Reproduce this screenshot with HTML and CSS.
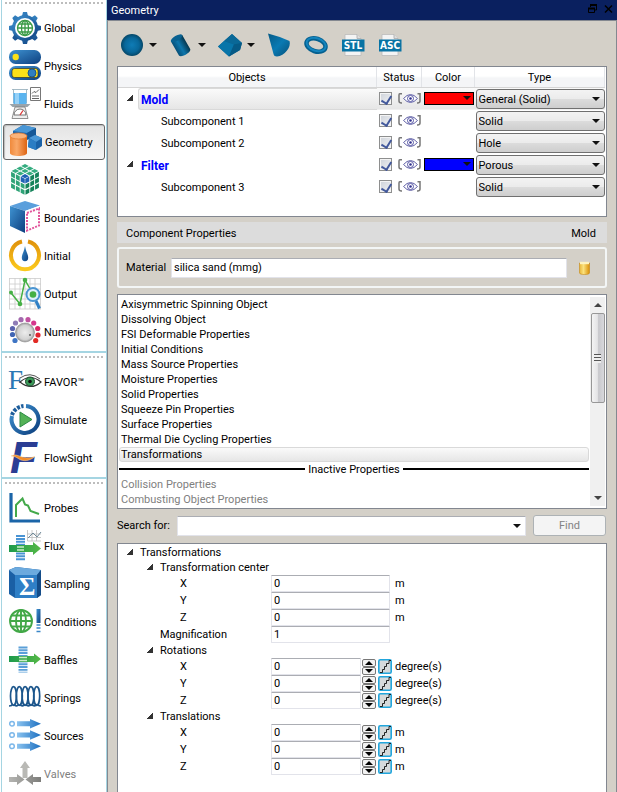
FILE: index.html
```html
<!DOCTYPE html>
<html lang="en">
<head>
<meta charset="utf-8">
<title>Geometry</title>
<link rel="stylesheet" href="styles.css">
</head>
<body>
<svg class="defs" aria-hidden="true">
  <defs>
    <linearGradient id="blue" x1="0" y1="0" x2="1" y2="1"><stop offset="0" stop-color="#3f93d2"/><stop offset="1" stop-color="#0d3f7e"/></linearGradient>
    <linearGradient id="blueH" x1="0" y1="0" x2="1" y2="0"><stop offset="0" stop-color="#8cc4f0"/><stop offset="1" stop-color="#1c6fc0"/></linearGradient>
    <linearGradient id="orange" x1="0" y1="0" x2="1" y2="0"><stop offset="0" stop-color="#f08a3c"/><stop offset=".4" stop-color="#f9a868"/><stop offset="1" stop-color="#dd6413"/></linearGradient>
    <linearGradient id="gold" x1="0" y1="0" x2="0" y2="1"><stop offset="0" stop-color="#e0930c"/><stop offset="1" stop-color="#fbc81c"/></linearGradient>
    <linearGradient id="green" x1="0" y1="0" x2="1" y2="0"><stop offset="0" stop-color="#1d9a4c"/><stop offset="1" stop-color="#57b947"/></linearGradient>
    <linearGradient id="grey" x1="0" y1="0" x2="1" y2="0"><stop offset="0" stop-color="#b5b5b2"/><stop offset="1" stop-color="#7d7d7a"/></linearGradient>
    <linearGradient id="drum" x1="0" y1="0" x2="1" y2="0"><stop offset="0" stop-color="#e8b63a"/><stop offset=".4" stop-color="#fbe27c"/><stop offset="1" stop-color="#d98f06"/></linearGradient>
    <linearGradient id="tube" x1="0" y1="0" x2="1" y2="0"><stop offset="0" stop-color="#075078"/><stop offset=".45" stop-color="#0d76ac"/><stop offset="1" stop-color="#04374f"/></linearGradient>
    <linearGradient id="slope" x1="0" y1="0" x2="1" y2="1"><stop offset="0" stop-color="#065a86"/><stop offset=".5" stop-color="#0a7ab3"/><stop offset="1" stop-color="#065079"/></linearGradient>
    <radialGradient id="ball"><stop offset="0" stop-color="#0f7cb6"/><stop offset=".65" stop-color="#08679a"/><stop offset="1" stop-color="#054768"/></radialGradient>
    <radialGradient id="knob"><stop offset="0" stop-color="#ededed"/><stop offset=".75" stop-color="#d2d2d2"/><stop offset="1" stop-color="#9c9c9c"/></radialGradient>
    <symbol id="eye" viewBox="0 0 23 11">
      <path d="M4 .8H1.800Q1 .8 1 2V8Q1 10 3.500 10H4M19.500 .8H22V8Q22 10 19.500 10H19" fill="none" stroke="#777" stroke-width="1.500"/>
      <path d="M5.500 5.500Q12.500 -2.500 19.500 5.500Q12.500 13.500 5.500 5.500Z" fill="#fff" stroke="#6464a8"/>
      <circle cx="12.500" cy="5.500" r="3" fill="#fff" stroke="#5555a5"/><circle cx="12.500" cy="5.500" r="1.300" fill="#30308e"/>
    </symbol>
    <symbol id="step" viewBox="0 0 14 15">
      <rect x=".8" y=".8" width="12.400" height="13.400" rx="1.500" fill="#d6dadb" stroke="#22a6dc" stroke-width="1.600"/>
      <path d="M2 13.500H4.500V10.500H6.500V7.500H8.500V4.500H11V1.500H13" fill="none" stroke="#222"/>
    </symbol>
    <g id="tiles">
      <path d="M1.100 .1h.8v.8h-.8zM2.100 .1h.8v.8h-.8zM.1 1.100h.8v.8h-.8zM1.100 1.100h.8v.8h-.8zM2.100 1.100h.8v.8h-.8zM.1 2.100h.8v.8h-.8zM1.100 2.100h.8v.8h-.8zM2.100 2.100h.8v.8h-.8z"/>
      <path d="M.05 .05h.85v.85h-.85z" fill="#1f62b5"/>
    </g>
  </defs>
</svg>
<div class="app">
  <nav class="sidebar" aria-label="Model setup">
    <section class="group">
      <div class="grip"></div>
      <button class="item"><svg viewBox="0 0 32 32">
        <g fill="url(#blue)"><circle cx="16" cy="16" r="13"/><path d="M13 4l1-4h4l1 4zM13 28l1 4h4l1-4zM4 13l-4 1v4l4 1zM28 13l4 1v4l-4 1z"/><path d="M13 4l1-4h4l1 4zM13 28l1 4h4l1-4zM4 13l-4 1v4l4 1zM28 13l4 1v4l-4 1z" transform="rotate(45 16 16)"/></g>
        <circle cx="16" cy="16" r="10" fill="#fff"/>
        <g fill="none" stroke="#3a9a45" stroke-width="1.300"><circle cx="16" cy="16" r="7.500"/><ellipse cx="16" cy="16" rx="3.500" ry="7.500"/><path d="M16 8.500v15M8.500 16h15M10 12h12M10 20h12"/></g></svg>Global</button>
      <button class="item"><svg viewBox="0 0 32 32"><rect y="0" width="32" height="14" rx="6.500" fill="url(#blue)"/><circle cx="6.700" cy="7" r="3.200" fill="#fbe118"/><rect y="16" width="32" height="14" rx="6.500" fill="url(#blue)"/><rect x="3" y="18.500" width="26" height="9" rx="2.500" fill="#fbe118" stroke="#222" stroke-width=".6"/><circle cx="23" cy="23" r="4" fill="#2f7fc0" stroke="#17568f"/></svg>Physics</button>
      <button class="item"><svg viewBox="0 0 32 32"><path d="M3 1.500h16M4.500 1.500V15h13V1.500" fill="#fff" stroke="#8fa9b8" stroke-width=".8"/><rect x="4.500" y="5" width="13" height="11" fill="#5bb4ef"/><rect x="6" y="5" width="4" height="11" fill="#96d1f7"/><path d="M.5 16h21l-3 3h-15z" fill="#9aa4ab"/><path d="M6 19h10l3 11.500H3z" fill="#eee" stroke="#777" stroke-width=".8"/><path d="M5 27a6 6 0 0 1 12 0z" fill="#fff" stroke="#555" stroke-width=".8"/><path d="M11 27l3-4.500" stroke="#d33" stroke-width="1.300"/><path d="M21.500-.5h10v13h-10z" fill="#fff" stroke="#777"/><path d="M23 5.500l2-2 2 1 3-3M23 8h7M23 10.500h7" fill="none" stroke="#555" stroke-width=".9"/></svg>Fluids</button>
      <button class="item active"><svg viewBox="0 0 32 32"><path d="M3 5L13-1l13 3v8l-8 3-15-3z" fill="#1d65aa"/><path d="M3 5L13-1l13 3-9 5z" fill="#4a97d6"/><path d="M17 7l9-5v8l-9 4z" fill="#165897"/><path d="M19 12l6-3 7 3v8l-6 4-8-3z" fill="#1a62a8"/><path d="M19 12l6-3 7 3-6 4z" fill="#4a97d6"/><path d="M19 12l7 4v8l-8-3z" fill="#2b7dc4"/><path d="M0 10v17c0 4 17 4 17 0V10z" fill="url(#orange)"/><ellipse cx="8.500" cy="10" rx="8.500" ry="3" fill="#fbb37a" stroke="#e77f33" stroke-width=".8"/></svg>Geometry</button>
      <button class="item"><svg viewBox="0 0 32 32">
        <use href="#tiles" transform="matrix(-4.800 -2.500 4.800 -2.500 16 14.500)" fill="#35ad80"/>
        <use href="#tiles" transform="matrix(-4.800 -2.500 0 5.700 16 14.500)" fill="#2fa377"/>
        <use href="#tiles" transform="matrix(4.800 -2.500 0 5.700 16 14.500)" fill="#15835a"/></svg>Mesh</button>
      <button class="item"><svg viewBox="0 0 32 32"><path d="M1 4l15-5 15 4.500L16 9z" fill="#5b9fdc"/><path d="M1 4l15 5v22L1 24z" fill="url(#blue)"/><path d="M16 9l15-5.500v21L16 31z" fill="#fff"/><path d="M18 11l12-4.500v17l-12 5z" fill="none" stroke="#e2559b" stroke-width="2" stroke-dasharray="2 1.200"/></svg>Boundaries</button>
      <button class="item"><svg viewBox="0 0 32 32"><path d="M19 1.500A14 14 0 1 1 13 1.500" fill="none" stroke="url(#gold)" stroke-width="4"/><path d="M16 6c1 6 3.200 8.500 3.200 11.500a3.200 3.800 0 0 1-6.400 0C12.800 14.500 15 12 16 6z" fill="url(#blue)"/></svg>Initial</button>
      <button class="item"><svg viewBox="0 0 32 32"><path d="M.5 0v31M6 0v31M11 0v31M16 0v31M21 0v31M26 0v31M31.500 0v31M0 .5h32M0 6h32M0 11h32M0 16h32M0 21h32M0 26h32M0 31h32" stroke="#ccc" stroke-width=".8"/><path d="M1.700 14.500L11 26 16 2l8 14" fill="none" stroke="#45b045" stroke-width="1.500"/><g fill="#45b045"><circle cx="2" cy="14.500" r="2"/><circle cx="11" cy="26" r="2.300"/><circle cx="16" cy="2" r="2.300"/></g><circle cx="24" cy="16.500" r="6.500" fill="#dff1fc" stroke="#4b95d2" stroke-width="2"/><circle cx="24" cy="16.500" r="3.300" fill="#45b045"/><path d="M27 23l3.500 7.500" stroke="#3180c5" stroke-width="3"/></svg>Output</button>
      <button class="item"><svg viewBox="0 0 32 32"><circle cx="16" cy="16.500" r="9.500" fill="url(#knob)" stroke="#888" stroke-width=".6"/><circle cx="21" cy="19" r=".9" fill="#555"/><circle cx="6" cy="24.500" r="2.600" fill="#3e75c4"/><circle cx="3.500" cy="18.500" r="2.600" fill="#4166b4"/><circle cx="3.500" cy="12.500" r="2.600" fill="#5a62ae"/><circle cx="6.500" cy="7" r="2.600" fill="#8f7cb6"/><circle cx="12" cy="3.700" r="2.600" fill="#a269ad"/><circle cx="19" cy="3.700" r="2.600" fill="#c0519f"/><circle cx="24.700" cy="7" r="2.600" fill="#d4388c"/><circle cx="28.700" cy="12.500" r="2.600" fill="#d92667"/><circle cx="29" cy="19" r="2.600" fill="#e0242f"/><circle cx="26.700" cy="24.500" r="2.600" fill="#e22a24"/></svg>Numerics</button>
    </section>
    <section class="group">
      <div class="grip"></div>
      <button class="item"><svg viewBox="0 0 32 32"><text class="serif-f" x="-1" y="23">F</text><path d="M11 16q10-9 21 0-10 9-21 0z" fill="#fff" stroke="#333" stroke-width="1.200"/><circle cx="21" cy="15.500" r="4.500" fill="#3a9a58" stroke="#1c4a2c"/><circle cx="21" cy="15.500" r="1.800" fill="#111"/><path d="M11 12q10-7 20 1" fill="none" stroke="#555"/></svg>FAVOR™</button>
      <button class="item"><svg viewBox="0 0 32 32"><path d="M17 2A13.500 13.500 0 1 1 3 12" fill="none" stroke="url(#blue)" stroke-width="4"/><path d="M3 11A13.500 13.500 0 0 1 14.500 2" fill="none" stroke="#1d5d9b" stroke-width="4" stroke-dasharray="3 1.300"/><path d="M11 8l12 7.500L11 23z" fill="#54b257" stroke="#2d8b45"/></svg>Simulate</button>
      <button class="item"><svg viewBox="0 0 32 32"><text class="logo-f" x="1" y="31">F</text><path d="M2 14c7-4 11 5 24 .5-6 5-12 5-16 2.500-3-2-5-3-8-3z" fill="#f28c28" stroke="#fbd9a8" stroke-width=".5"/></svg>FlowSight</button>
    </section>
    <section class="group">
      <div class="grip"></div>
      <button class="item"><svg viewBox="0 0 32 32"><path d="M2 1v28h29" fill="none" stroke="#1b65a8" stroke-width="3.200"/><path d="M7 25V13l6.500-6.500 2.500 6 3 1 2.500 5.500 8.500 3" fill="none" stroke="#43a94a" stroke-width="2"/></svg>Probes</button>
      <button class="item"><svg viewBox="0 0 32 32"><path d="M18.500 0v11H32M23 0v11M27.500 0v11M18 4h14M18 7.500h14" fill="none" stroke="#bbb" stroke-width=".8"/><path d="M19 8l5-5 4 4 4-5" fill="none" stroke="#6f8a9a"/><path d="M11.500 5v26" stroke="#4a94d4" stroke-width="9" stroke-dasharray="2 .9"/><path d="M0 15h24v-3l8 6.500-8 6.500v-3H0z" fill="url(#green)"/><path d="M8 17h7M8 20h7" stroke="#cdeec9" stroke-width="1.300"/></svg>Flux</button>
      <button class="item"><svg viewBox="0 0 32 32"><path d="M0 2l7-3 25 3v25l-4 3H6l-6-4z" fill="#1a5fa5"/><path d="M0 2l7-3 25 3-4 5H6z" fill="#6caade"/><path d="M28 7l4-5v25l-4 3z" fill="#144c88"/><path d="M6 7h22v23H6z" fill="#2f7fc6"/><text class="sigma" x="10" y="27">Σ</text></svg>Sampling</button>
      <button class="item"><svg viewBox="0 0 32 32"><g fill="none" stroke="#42a847" stroke-width="1.900"><circle cx="12" cy="15" r="11"/><ellipse cx="12" cy="15" rx="5" ry="11"/><path d="M12 4v22M1 15h22M3 9.500h18M3 20.500h18"/></g><path d="M27.500 3h4v14h-4z" fill="url(#blue)"/><path d="M27.500 19h4M27.500 22h4M27.500 25.500h4" stroke="#3a86c8" stroke-width="1.500"/></svg>Conditions</button>
      <button class="item"><svg viewBox="0 0 32 32"><path d="M14 2.500v26" stroke="#5b9fd8" stroke-width="9" stroke-dasharray="1.900 .9"/><path d="M0 12h25V9.500l7 5.500-7 5.500V18H0z" fill="url(#green)"/><path d="M10 13.500h8M10 16.500h8" stroke="#cdeec9" stroke-width="1.300"/></svg>Baffles</button>
      <button class="item"><svg viewBox="0 0 32 32"><g fill="none" stroke="#1c568c" stroke-width="1.700"><ellipse cx="4.500" cy="14" rx="3" ry="9.300"/><ellipse cx="10.300" cy="14" rx="3" ry="9.300"/><ellipse cx="16.100" cy="14" rx="3" ry="9.300"/><ellipse cx="21.900" cy="14" rx="3" ry="9.300"/><ellipse cx="27.700" cy="14" rx="3" ry="9.300"/><path d="M0 24q3 0 4-2M5 23q4 2 5-1M11 23q4 2 5-1M17 23q4 2 5-1M23 23q4 2 5-1M29 23q1 1 3 1"/></g></svg>Springs</button>
      <button class="item"><svg viewBox="0 0 32 32"><g fill="none" stroke="#7db8ea" stroke-width="1.500"><circle cx="3" cy="3.700" r="2.300"/><circle cx="3" cy="15" r="2.300"/><circle cx="3" cy="26.300" r="2.300"/></g><g fill="url(#blueH)"><path d="M8 1.200h13V-1l11 4.700-11 4.700V6.200H8z"/><path d="M8 12.500h13v-2.200L32 15l-11 4.700v-2.200H8z"/><path d="M8 23.800h13v-2.200l11 4.700L21 31v-2.200H8z"/></g></svg>Sources</button>
      <button class="item disabled" disabled><svg viewBox="0 0 32 32"><path d="M13.500 20V10H11l5-7 5 7h-2.500v10z" fill="#b9b9b5"/><path d="M0 19h8v-3l7.500 5.500L8 27v-3H0zM32 19h-8v-3l-7.500 5.500L24 27v-3h8z" fill="url(#grey)"/></svg>Valves</button>
    </section>
  </nav>

  <main class="main">
    <header class="titlebar">
      <span>Geometry</span>
      <button aria-label="Restore"><svg viewBox="0 0 9 10"><path d="M2.500 3V1h6v5h-2M.5 4.500h6v4h-6z" fill="none" stroke="#000"/><path d="M2 1h7M0 4.500h7" stroke="#000" stroke-width="2"/></svg></button>
      <button aria-label="Close"><svg viewBox="0 0 9 10"><path d="M1 1.500l7 7M8 1.500l-7 7" stroke="#000" stroke-width="1.500"/></svg></button>
    </header>
    <div class="panel">
      <div class="toolbar">
        <button class="drop" aria-label="Sphere"><svg viewBox="0 0 24 24"><circle cx="12" cy="12" r="11" fill="url(#ball)"/></svg></button>
        <button class="drop" aria-label="Cylinder"><svg viewBox="0 0 24 24"><g transform="rotate(-30 12 12)"><path d="M5 4v16c0 3.500 13 3.500 13 0V4z" fill="url(#tube)"/><ellipse cx="11.500" cy="4" rx="6.500" ry="2.600" fill="#0a6291"/></g></svg></button>
        <button class="drop" aria-label="Box"><svg viewBox="0 0 24 24"><path d="M0 13.500L14 1l10 9-2 7-11 6.500z" fill="#07608f"/><path d="M14 1l10 9-8 1.500L6 8z" fill="#0a6897"/><path d="M6 8l10 3.500-5 12L0 13.500z" fill="#0875a9"/><path d="M16 11.500l8-1.500-2 7-11 6.500z" fill="#065a86"/></svg></button>
        <button aria-label="Cone"><svg viewBox="0 0 24 24"><path d="M1 .5Q13 3.500 22.500 8c2 6-5 15-12.500 15.500Q7 23.500 6.500 21z" fill="url(#slope)"/></svg></button>
        <button aria-label="Torus"><svg viewBox="0 0 24 24"><ellipse cx="12" cy="12" rx="9.800" ry="6.300" transform="rotate(18 12 12)" fill="none" stroke="#05608f" stroke-width="4.500"/><ellipse cx="12" cy="11.500" rx="9.800" ry="6.300" transform="rotate(18 12 12)" fill="none" stroke="#1484bd" stroke-width="2"/></svg></button>
        <button aria-label="Import STL"><svg viewBox="0 0 24 24"><path d="M4 1.500h12l4 4v17H4z" fill="#f4f4f4" stroke="#bbb" stroke-width=".8"/><path d="M16 1.500v4h4" fill="#ddd" stroke="#aaa" stroke-width=".8"/><rect x="1" y="6.500" width="22.500" height="12" fill="#0873a3"/><text class="badge" x="12" y="16">STL</text></svg></button>
        <button aria-label="Import ASC"><svg viewBox="0 0 24 24"><path d="M4 1.500h12l4 4v17H4z" fill="#f4f4f4" stroke="#bbb" stroke-width=".8"/><path d="M16 1.500v4h4" fill="#ddd" stroke="#aaa" stroke-width=".8"/><rect x="1" y="6.500" width="22.500" height="12" fill="#0873a3"/><text class="badge" x="12" y="16">ASC</text></svg></button>
      </div>

      <div class="objects frame">
        <table>
          <colgroup><col><col class="c-status"><col class="c-color"><col class="c-type"></colgroup>
          <thead><tr><th>Objects</th><th>Status</th><th>Color</th><th>Type</th></tr></thead>
          <tbody>
            <tr class="selected"><td><div class="name parent"><i class="twisty"></i><b>Mold</b></div></td><td><div class="status"><input type="checkbox" checked aria-label="Mold enabled"><button aria-label="Mold visibility"><svg><use href="#eye"/></svg></button></div></td><td><button class="color red" aria-label="Mold color"></button></td><td><span class="combo"><select aria-label="Mold type"><option>General (Solid)</option></select></span></td></tr>
            <tr><td><div class="name child">Subcomponent 1</div></td><td><div class="status"><input type="checkbox" checked aria-label="Subcomponent 1 enabled"><button aria-label="Subcomponent 1 visibility"><svg><use href="#eye"/></svg></button></div></td><td></td><td><span class="combo"><select aria-label="Subcomponent 1 type"><option>Solid</option></select></span></td></tr>
            <tr><td><div class="name child">Subcomponent 2</div></td><td><div class="status"><input type="checkbox" checked aria-label="Subcomponent 2 enabled"><button aria-label="Subcomponent 2 visibility"><svg><use href="#eye"/></svg></button></div></td><td></td><td><span class="combo"><select aria-label="Subcomponent 2 type"><option>Hole</option></select></span></td></tr>
            <tr><td><div class="name parent"><i class="twisty"></i><b>Filter</b></div></td><td><div class="status"><input type="checkbox" checked aria-label="Filter enabled"><button aria-label="Filter visibility"><svg><use href="#eye"/></svg></button></div></td><td><button class="color blue" aria-label="Filter color"></button></td><td><span class="combo"><select aria-label="Filter type"><option>Porous</option></select></span></td></tr>
            <tr><td><div class="name child">Subcomponent 3</div></td><td><div class="status"><input type="checkbox" checked aria-label="Subcomponent 3 enabled"><button aria-label="Subcomponent 3 visibility"><svg><use href="#eye"/></svg></button></div></td><td></td><td><span class="combo"><select aria-label="Subcomponent 3 type"><option>Solid</option></select></span></td></tr>
          </tbody>
        </table>
      </div>

      <div class="caption"><span>Component Properties</span><span>Mold</span></div>

      <div class="material">
        <label for="material">Material</label>
        <input class="field" id="material" type="text" value="silica sand (mmg)">
        <button aria-label="Material database"><svg viewBox="0 0 11 14"><path d="M.5 2v10c0 2 10 2 10 0V2z" fill="url(#drum)" stroke="#c48a1a" stroke-width=".6"/><path d="M1 .8h9v2.400H1z" fill="#fdf3c0"/></svg></button>
      </div>

      <div class="properties frame">
        <ul>
          <li>Axisymmetric Spinning Object</li>
          <li>Dissolving Object</li>
          <li>FSI Deformable Properties</li>
          <li>Initial Conditions</li>
          <li>Mass Source Properties</li>
          <li>Moisture Properties</li>
          <li>Solid Properties</li>
          <li>Squeeze Pin Properties</li>
          <li>Surface Properties</li>
          <li>Thermal Die Cycling Properties</li>
          <li class="current">Transformations</li>
          <li class="divider">Inactive Properties</li>
          <li class="inactive">Collision Properties</li>
          <li class="inactive">Combusting Object Properties</li>
        </ul>
        <div class="scroll" aria-hidden="true"><i class="up"></i><i class="thumb"></i><i class="down"></i></div>
      </div>

      <div class="search">
        <label for="search">Search for:</label>
        <span class="combo editable"><input class="field" id="search" type="text"></span>
        <button disabled>Find</button>
      </div>

      <div class="tree frame">
        <div class="node"><i class="twisty"></i>Transformations</div>
        <div class="node sub"><i class="twisty"></i>Transformation center</div>
        <div class="row"><label for="cx">X</label><input class="field" id="cx" value="0"><span>m</span></div>
        <div class="row"><label for="cy">Y</label><input class="field" id="cy" value="0"><span>m</span></div>
        <div class="row"><label for="cz">Z</label><input class="field" id="cz" value="0"><span>m</span></div>
        <div class="row shallow"><label for="mag">Magnification</label><input class="field" id="mag" value="1"></div>
        <div class="node sub"><i class="twisty"></i>Rotations</div>
        <div class="row spin"><label for="rx">X</label><input class="field" id="rx" value="0"><div class="steps"><button aria-label="Increase"></button><button aria-label="Decrease"></button></div><button class="table" aria-label="Rotation X table"><svg><use href="#step"/></svg></button><span>degree(s)</span></div>
        <div class="row spin"><label for="ry">Y</label><input class="field" id="ry" value="0"><div class="steps"><button aria-label="Increase"></button><button aria-label="Decrease"></button></div><button class="table" aria-label="Rotation Y table"><svg><use href="#step"/></svg></button><span>degree(s)</span></div>
        <div class="row spin"><label for="rz">Z</label><input class="field" id="rz" value="0"><div class="steps"><button aria-label="Increase"></button><button aria-label="Decrease"></button></div><button class="table" aria-label="Rotation Z table"><svg><use href="#step"/></svg></button><span>degree(s)</span></div>
        <div class="node sub"><i class="twisty"></i>Translations</div>
        <div class="row spin"><label for="tx">X</label><input class="field" id="tx" value="0"><div class="steps"><button aria-label="Increase"></button><button aria-label="Decrease"></button></div><button class="table" aria-label="Translation X table"><svg><use href="#step"/></svg></button><span>m</span></div>
        <div class="row spin"><label for="ty">Y</label><input class="field" id="ty" value="0"><div class="steps"><button aria-label="Increase"></button><button aria-label="Decrease"></button></div><button class="table" aria-label="Translation Y table"><svg><use href="#step"/></svg></button><span>m</span></div>
        <div class="row spin"><label for="tz">Z</label><input class="field" id="tz" value="0"><div class="steps"><button aria-label="Increase"></button><button aria-label="Decrease"></button></div><button class="table" aria-label="Translation Z table"><svg><use href="#step"/></svg></button><span>m</span></div>
      </div>
    </div>
  </main>
</div>
</body>
</html>
```
FILE: styles.css
```css
* { box-sizing: border-box; }

body {
  margin: 0;
  font: 11px/15px Roboto, "DejaVu Sans Condensed", sans-serif;
  color: #000;
  background: #fff;
}

button, input, select { font: inherit; color: inherit; margin: 0; padding: 0; }
button { border: 0; background: none; }
svg { display: block; overflow: visible; }
.defs { position: absolute; width: 0; height: 0; }

.app { display: flex; height: 100vh; overflow: hidden; }

/* Sidebar */
.sidebar {
  flex: none;
  width: 106px;
  margin-left: 1px;
  border: solid #a5d5e2;
  border-width: 0 1px;
}
.group { border-top: 2px solid #a5d5e2; }
.group:first-child { border-top: 0; margin-top: -1px; }
.grip {
  height: 2px;
  margin: 3px 2px 5px 3px;
  background: repeating-linear-gradient(90deg, #bdbdbd 0 2px, transparent 2px 4px);
}
.item {
  display: flex;
  align-items: center;
  gap: 3px;
  width: 103px;
  height: 38px;
  padding-left: 7px;
  text-align: left;
  white-space: nowrap;
}
.item svg { flex: none; width: 32px; height: 32px; }
.item.active {
  width: 102px;
  height: 36px;
  margin: 1px;
  padding-left: 6px;
  border: 1px solid #666;
  border-radius: 3px;
  background: linear-gradient(#e4e4e4, #f6f6f6);
  box-shadow: inset 1px 1px 1px #bbb;
}
.item.disabled { color: #808080; }
.serif-f { font: 27px "Liberation Serif", serif; fill: #2a78b4; }
.logo-f { font: italic bold 44px "Liberation Sans", sans-serif; fill: #2a3d94; }
.sigma { font: bold 25px "Liberation Serif", serif; fill: #fff; }

/* Main panel */
.main { flex: 1; min-width: 0; display: flex; flex-direction: column; }
.titlebar {
  flex: none;
  display: flex;
  align-items: center;
  gap: 7px;
  height: 20px;
  padding: 0 4px;
  color: #fff;
  background: #0a205f;
}
.titlebar span { flex: 1; }
.titlebar svg { width: 9px; height: 10px; }
.titlebar button { align-self: flex-start; padding-top: 4px; }
.panel {
  flex: 1;
  display: flex;
  flex-direction: column;
  min-height: 0;
  padding: 0 9px;
  border: 1px solid #848890;
  border-bottom: 0;
  background: #d4d0c8;
}
.frame { border: 1px solid #828790; background: #fff; }

.toolbar { flex: none; display: flex; align-items: center; gap: 13px; height: 45px; padding: 3px 0 0 3px; }
.toolbar svg { width: 24px; height: 24px; }
.drop { display: flex; align-items: center; gap: 5px; margin-right: -1px; }
.drop::after, .combo::after, .color::after {
  content: "";
  border: 4px solid transparent;
  border-top-color: #111;
  border-bottom: 0;
}
.badge { font: bold 10px "DejaVu Sans Condensed", sans-serif; fill: #fff; text-anchor: middle; }

/* Object table */
.objects { flex: none; height: 151px; padding-right: 1px; }
table { width: 100%; border-collapse: collapse; table-layout: fixed; }
.c-status { width: 45px; }
.c-color { width: 53px; }
.c-type { width: 130px; }
th {
  height: 20px;
  padding: 1px 0 0;
  font-weight: normal;
  border-right: 1px solid #e2e4e8;
  border-bottom: 1px solid #d5d5d5;
  background: linear-gradient(#fff 45%, #f4f5f7 55%, #f4f5f7);
}
td { height: 22px; padding: 0; }
.name { display: flex; align-items: center; height: 22px; }
.name b { flex: 1; height: 22px; padding-left: 3px; line-height: 24px; color: #00f; font-size: 12px; }
.child { padding: 2px 0 0 43px; }
.parent { padding-left: 9px; }
.twisty {
  flex: none;
  width: 11px;
  height: 8px;
  background: linear-gradient(135deg, transparent 45%, #333 50%) left top / 6px 6px no-repeat;
}
.selected b { border: solid #d9d9d9; border-width: 1px 0 1px 1px; border-radius: 3px 0 0 3px; padding-left: 2px; line-height: 22px; }
.selected b, .selected td:not(:first-child) { background: linear-gradient(#fafafa, #e6e6e6); }
.status { display: flex; align-items: center; gap: 6px; padding-left: 2px; }
.status svg { width: 23px; height: 11px; }
input[type="checkbox"] {
  appearance: none;
  width: 13px;
  height: 13px;
  border: 1px solid #8e8f8f;
  outline: 1px solid #f4f4f4;
  outline-offset: -2px;
  background: linear-gradient(135deg, #cdd2d9, #f2f3f5);
}
input[type="checkbox"]::after {
  content: "";
  display: block;
  width: 5px;
  height: 8px;
  margin: 1px 0 0 3px;
  border: solid #43599c;
  border-width: 0 2px 2px 0;
  transform: rotate(32deg);
}
.color {
  display: flex;
  justify-content: flex-end;
  width: 50px;
  height: 13px;
  margin-left: 2px;
  padding: 3px 2px;
  border: 1px solid #000;
}
.red { background: #f00; }
.blue { background: #00f; }
.combo { position: relative; display: block; }
.combo::after { position: absolute; right: 5px; top: 8px; pointer-events: none; }
.combo select {
  display: block;
  appearance: none;
  width: 100%;
  height: 20px;
  padding: 1px 2px 0;
  border: 1px solid #707070;
  border-radius: 3px;
  background: linear-gradient(#f3f3f3, #ebebeb 50%, #dcdcdc 51%, #cecece);
}
td .combo { margin-left: 1px; }

/* Component properties */
.caption {
  flex: none;
  display: flex;
  justify-content: space-between;
  height: 21px;
  margin: 5px 0 4px;
  padding: 4px 11px 2px 9px;
  background: #dcdcdc;
}
.field {
  min-width: 0;
  border: 1px solid #e2e3ea;
  border-top-color: #abadb3;
  border-radius: 1px;
  background: #fff;
  padding: 0 2px;
  outline: 0;
}
.material {
  flex: none;
  display: flex;
  align-items: center;
  height: 41px;
  padding: 0 15px 0 7px;
  border: 2px solid #f3f6f6;
  border-radius: 3px;
}
.material label { width: 45px; }
.material .field { flex: 1; height: 20px; }
.material svg { width: 11px; height: 14px; margin-left: 12px; }

.properties { flex: none; display: flex; height: 215px; margin: 6px 0; padding: 2px 1px 2px 1px; }
.properties ul { flex: 1; margin: 0; padding: 0; list-style: none; }
.properties li { height: 15px; padding-left: 2px; }
.properties .current {
  padding-left: 1px;
  line-height: 14px;
  border: 1px solid #d9d9d9;
  border-radius: 3px;
  background: linear-gradient(#fafafa, #e6e6e6);
}
.properties .divider { display: flex; align-items: center; gap: 3px; padding: 0; }
.divider::before, .divider::after { content: ""; flex: 1; height: 2px; margin-bottom: 2px; background: #000; }
.properties .inactive { color: #808080; }
.scroll {
  display: flex;
  flex-direction: column;
  align-items: center;
  width: 15px;
  margin-left: 1px;
  background: #f0f0f0;
}
.scroll .up, .scroll .down { margin: 6px 0; border: 4px solid transparent; }
.scroll .up { border-bottom-color: #444; border-top: 0; }
.scroll .down { margin-top: auto; border-top-color: #444; border-bottom: 0; }
.thumb {
  width: 14px;
  height: 90px;
  border: 1px solid #979797;
  border-radius: 2px;
  background:
    repeating-linear-gradient(#555 0 1px, #eee 1px 3px) center / 7px 9px no-repeat,
    linear-gradient(90deg, #f4f4f4, #e4e4e6 45%, #c8c8cc 55%, #d8d8dc);
}

.search { flex: none; display: flex; align-items: center; height: 21px; margin-bottom: 7px; }
.search label { width: 60px; }
.editable { flex: 1; }
.editable .field { display: block; width: 100%; height: 20px; }
.search button {
  width: 73px;
  height: 21px;
  margin: 0 1px 0 7px;
  color: #838383;
  border: 1px solid #adb2b5;
  border-radius: 3px;
  background: #f4f4f4;
}

/* Transformation tree */
.tree { flex: 1; min-height: 0; padding: 1px 0 0 9px; border-bottom: 0; }
.node { display: flex; align-items: center; height: 15px; gap: 2px; }
.node.sub { padding-left: 20px; }
.row { display: flex; align-items: center; height: 17px; }
.row label { width: 144px; padding-left: 53px; }
.row.shallow label { padding-left: 33px; }
.row .field { width: 119px; height: 17px; }
.row.spin .field { width: 90px; }
.row > span { margin-left: 5px; }
.row.spin > span { margin-left: 3px; }
.steps { display: flex; flex-direction: column; width: 14px; margin: 0 2px 0 1px; }
.steps button {
  display: flex;
  justify-content: center;
  align-items: center;
  height: 8px;
  border: 1px solid #777;
  border-radius: 2px;
  background: #f2f2f2;
}
.steps button::after { content: ""; border: 4px solid transparent; }
.steps button:first-child::after { border-bottom-color: #000; border-top: 0; }
.steps button:last-child::after { border-top-color: #000; border-bottom: 0; }
.table svg { width: 14px; height: 15px; }
```
